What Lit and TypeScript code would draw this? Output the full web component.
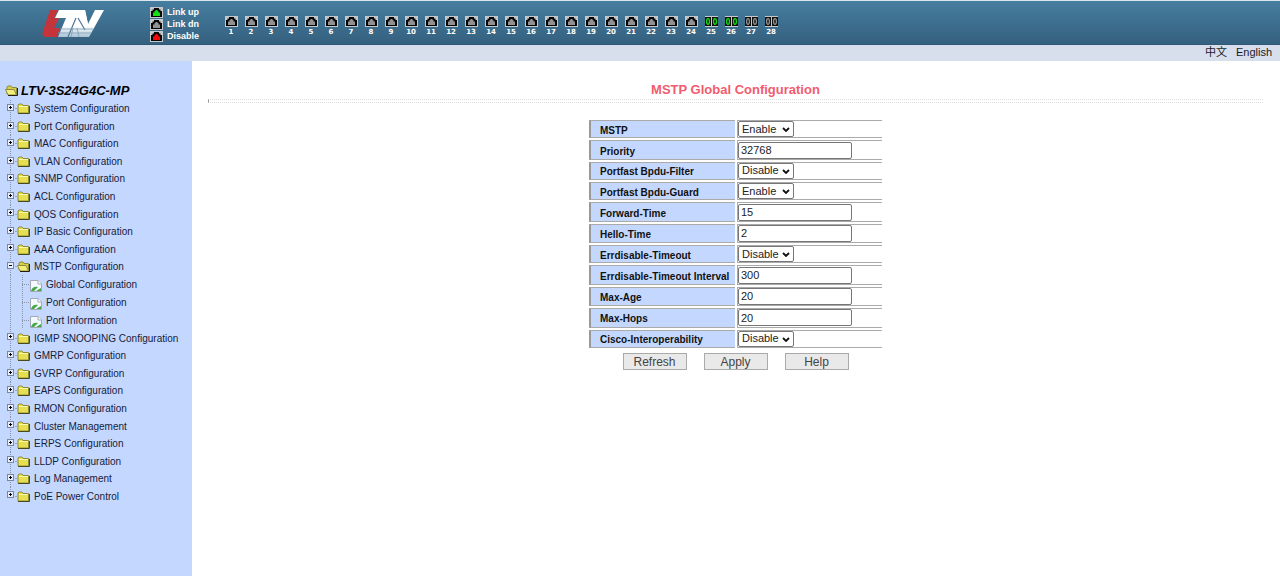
import { LitElement, html, svg, css } from "lit";
import { customElement, property } from "lit/decorators.js";

type PortState = "up" | "down" | "off";

@customElement("port-icon")
class PortIcon extends LitElement {
  @property() state: PortState = "down";
  @property({ type: Boolean }) fiber = false;

  static styles = css`
    :host { display: block; width: 13px; height: 11px; }
    svg { display: block; width: 100%; height: 100%; }
  `;

  render() {
    const lamp = { up: "#12e012", down: "#929292", off: "#f00a0a" }[this.state];
    return html`<svg viewBox="0 0 13 11" aria-hidden="true">
      <rect width="13" height="11" fill="#c4c8ca" />
      ${this.fiber
        ? svg`<rect x="0" y="1" width="6" height="9" fill="#111" /><rect x="7" y="1" width="6" height="9" fill="#111" />
            <ellipse cx="3" cy="5.5" rx="1.4" ry="2.8" fill="none" stroke=${lamp} stroke-width="1.3" />
            <ellipse cx="10" cy="5.5" rx="1.4" ry="2.8" fill="none" stroke=${lamp} stroke-width="1.3" />`
        : svg`<path d="M1 10V4H2.5V2.5H4V1H9V2.5H10.500V4H12V10Z" fill="#050505" />
            <path d="M3 9V5.500H4.500V4H5.500V3H7.500V4H8.500V5.500H10V9Z" fill=${lamp} />`}
    </svg>`;
  }
}

type Kind = "closed" | "open" | "page";
interface Node { text: string; kind: Kind; }

const closed = (text: string): Node => ({ text, kind: "closed" });
const TREE: Node[] = [
  ...["System", "Port", "MAC", "VLAN", "SNMP", "ACL", "QOS", "IP Basic", "AAA"].map((n) => closed(`${n} Configuration`)),
  { text: "MSTP Configuration", kind: "open" },
  { text: "Global Configuration", kind: "page" },
  { text: "Port Configuration", kind: "page" },
  { text: "Port Information", kind: "page" },
  ...["IGMP SNOOPING", "GMRP", "GVRP", "EAPS", "RMON"].map((n) => closed(`${n} Configuration`)),
  closed("Cluster Management"),
  closed("ERPS Configuration"),
  closed("LLDP Configuration"),
  closed("Log Management"),
  closed("PoE Power Control"),
];

const folder = html`<svg class="glyph" viewBox="0 0 13 11" aria-hidden="true">
  <path d="M1 10V2L2 1H5L6 2.500H11.500V10Z" fill="#e6df50" stroke="#8e8c3c" />
  <path d="M2 3.500H11" stroke="#fbf8a8" />
  <path d="M1 10.500H12.500V3" fill="none" stroke="#4a4a20" />
</svg>`;

const openFolder = html`<svg class="glyph" viewBox="0 0 13 11" aria-hidden="true">
  <path d="M2 9V2L3 1H6L7 2.500H11.500V10Z" fill="#d8cf48" stroke="#8e8c3c" />
  <path d="M0.500 4.500H9L11.500 10H3Z" fill="#f3ee7c" stroke="#8e8c3c" />
  <path d="M3 10.500H12.500V3" fill="none" stroke="#22220e" />
</svg>`;

const page = html`<svg class="page" viewBox="0 0 14 14" aria-hidden="true">
  <path d="M1.500 1.500H9L12.500 5V12.500H1.500Z" fill="#f4f8ff" stroke="#a2a8b4" />
  <path d="M9 1.500V5H12.500" fill="#fff" stroke="#a2a8b4" />
  <path d="M2 12C3 8 6 7 9 8L5 12ZM7 12L12 9V12Z" fill="#44a844" />
</svg>`;

@customElement("nav-tree")
class NavTree extends LitElement {
  static styles = css`
    :host { display: block; padding: 19px 0 0 5px; color: #16203a; font: 10px "Liberation Sans", Arial, sans-serif; }
    a { color: inherit; text-decoration: none; white-space: nowrap; }
    .root { display: flex; align-items: center; gap: 3px; height: 20px; color: #000; font: italic bold 13px "Liberation Sans", Arial, sans-serif; }
    ul { display: grid; grid-auto-rows: 1fr; height: 405px; margin: 0; padding: 0; list-style: none; }
    li { display: flex; align-items: center; padding-left: 2px; }
    .glyph { display: block; flex: none; width: 13px; height: 11px; }
    .page { display: block; flex: none; width: 14px; height: 14px; margin-top: 4px; }
    .trunk { flex: none; align-self: stretch; width: 8px; background: repeating-linear-gradient(#8a94a8 0 1px, transparent 1px 2px) 3px 0 / 1px 100% no-repeat; }
    .last { background-size: 1px 50%; }
    .box { display: block; width: 7px; height: 7px; margin-top: 4px; }
    .twig { flex: none; width: 2px; height: 1px; background: #9aa5bb; }
    .branch { flex: none; align-self: stretch; width: 8px; margin-left: 6px;
      background: repeating-linear-gradient(#8a94a8 0 1px, transparent 1px 2px) 1px 0 / 1px 100% no-repeat,
        repeating-linear-gradient(90deg, #8a94a8 0 1px, transparent 1px 2px) 1px 50% / 7px 1px no-repeat; }
    .text { margin-left: 4px; }
    .leaf { margin-left: 3px; }
  `;

  render() {
    return html`
      <a class="root" href="#">${openFolder}LTV-3S24G4C-MP</a>
      <ul>
        ${TREE.map((n, i) => n.kind === "page"
          ? html`<li><span class="trunk"></span><span class="branch"></span>${page}<a class="leaf" href="#">${n.text}</a></li>`
          : html`<li>
              <span class="trunk ${i === TREE.length - 1 ? "last" : ""}">
                <svg class="box" viewBox="0 0 7 7" aria-hidden="true">
                  <rect x=".5" y=".5" width="6" height="6" fill="#e6eeff" stroke="#7b869c" />
                  <path d=${n.kind === "open" ? "M2 3.500H5" : "M2 3.500H5M3.500 2V5"} stroke="#000" />
                </svg>
              </span>
              <span class="twig"></span>${n.kind === "open" ? openFolder : folder}<a class="text" href="#">${n.text}</a>
            </li>`)}
      </ul>`;
  }
}

interface Field { id: string; label: string; value: string; choice?: boolean; }
const FIELDS: Field[] = [
  { id: "mstp", label: "MSTP", value: "Enable", choice: true },
  { id: "priority", label: "Priority", value: "32768" },
  { id: "filter", label: "Portfast Bpdu-Filter", value: "Disable", choice: true },
  { id: "guard", label: "Portfast Bpdu-Guard", value: "Enable", choice: true },
  { id: "forward", label: "Forward-Time", value: "15" },
  { id: "hello", label: "Hello-Time", value: "2" },
  { id: "errdisable", label: "Errdisable-Timeout", value: "Disable", choice: true },
  { id: "interval", label: "Errdisable-Timeout Interval", value: "300" },
  { id: "age", label: "Max-Age", value: "20" },
  { id: "hops", label: "Max-Hops", value: "20" },
  { id: "cisco", label: "Cisco-Interoperability", value: "Disable", choice: true },
];

@customElement("mstp-form")
class MstpForm extends LitElement {
  static styles = css`
    :host { display: block; padding: 20px 17px 0 16px; }
    h1 { margin: 0; text-align: center; font-size: 13px; line-height: 18px; color: #f25c6e; }
    .rule { height: 4px; box-sizing: border-box; border: dotted #dcdcdc; border-width: 1px 0; border-left: 1px solid #999; }
    form { display: flex; flex-direction: column; align-items: center; margin-top: 15px; }
    table { height: 232px; border-spacing: 2px; }
    th, td { box-sizing: border-box; padding: 0; border: 1px solid #aaa; border-width: 1px 0 1px 1px; }
    th { width: 146px; padding: 3px 0 0 9px; background: #c4d8ff; border-left: 2px solid #999; text-align: left; white-space: nowrap; font-size: 10px; line-height: 12px; color: #111; }
    td { width: 145px; line-height: 0; }
    input, select { box-sizing: border-box; display: block; margin: 0; border: 1px solid #767676; border-radius: 2px; background: #fff; color: #222; font: 11px/13px "Liberation Sans", Arial, sans-serif; }
    input { width: 114px; height: 17px; padding: 0 2px; }
    .pick { position: relative; display: block; width: 56px; }
    select { width: 56px; height: 16px; padding: 0 0 0 3px; appearance: none; }
    .arrow { position: absolute; right: 4px; top: 6px; width: 8px; height: 5px; pointer-events: none; }
    .actions { display: flex; gap: 17px; margin-top: 3px; }
    button { width: 64px; height: 17px; padding: 0; border: 1px solid #aaa; background: #e9e9e9; color: #444; font: 12px/14px "Liberation Sans", Arial, sans-serif; }
  `;

  render() {
    return html`
      <h1>MSTP Global Configuration</h1>
      <div class="rule"></div>
      <form @submit=${(e: Event) => e.preventDefault()}>
        <table>
          ${FIELDS.map((f) => html`<tr>
            <th scope="row"><label for=${f.id}>${f.label}</label></th>
            <td>${f.choice
              ? html`<span class="pick"><select id=${f.id}>
                  ${["Enable", "Disable"].map((o) => html`<option ?selected=${o === f.value}>${o}</option>`)}
                </select><svg class="arrow" viewBox="0 0 8 5" aria-hidden="true"><path d="M1 1L4 4L7 1" fill="none" stroke="#111" stroke-width="1.800" /></svg></span>`
              : html`<input id=${f.id} type="text" .value=${f.value} />`}</td>
          </tr>`)}
        </table>
        <div class="actions">${["Refresh", "Apply", "Help"].map((b) => html`<button type="button">${b}</button>`)}</div>
      </form>`;
  }
}

@customElement("app-root")
class AppRoot extends LitElement {
  static styles = css`
    :host { display: flex; flex-direction: column; min-height: 100vh; background: #fff; font-family: "Liberation Sans", Arial, sans-serif; }
    header { display: flex; box-sizing: border-box; height: 45px; border-top: 1px solid #dbe6ee; border-bottom: 1px solid #2f5876; background: linear-gradient(#467e9f, #35607f); color: #fff; }
    .logo { display: block; width: 64px; height: 32px; margin: 7px 0 0 41px; }
    .legend { display: grid; align-content: start; gap: 1px; width: 71px; margin: 6px 0 0 45px; font-weight: bold; font-size: 9px; line-height: 11px; }
    .key { display: flex; gap: 4px; align-items: center; }
    .ports { display: flex; margin-top: 15px; }
    .port { display: grid; align-content: start; justify-items: center; width: 20px; row-gap: 1px; font: bold 7px/8px "DejaVu Sans", Verdana, sans-serif; }
    .langs { display: flex; justify-content: flex-end; gap: 9px; height: 16px; padding-right: 8px; background: #d8dfec; font: 11px/14px "Liberation Sans", "Noto Sans CJK SC", sans-serif; }
    .langs a { color: #1a1a2a; text-decoration: none; }
    .body { display: flex; flex: 1; }
    nav { flex: none; width: 192px; background: #c4d8ff; }
    main { flex: 1; min-width: 0; }
  `;

  render() {
    const legend: [PortState, string][] = [["up", "Link up"], ["down", "Link dn"], ["off", "Disable"]];
    return html`
      <header>
        <svg class="logo" viewBox="0 0 64 32" role="img" aria-label="LTV">
          <defs><linearGradient id="silver" x2="0" y2="1"><stop offset=".6" stop-color="#fff" /><stop offset="1" stop-color="#a9c3d6" /></linearGradient></defs>
          <path d="M9 2H17L13 10H18L13 20H19L16 29H6Q0 29 2 23Z" fill="#c5343b" />
          <path d="M18 2H44L47 16L54 2H63L48 29H17L25 10H14Z" fill="url(#silver)" />
          <path d="M44 2L47 16L43 19L36 10Z" fill="#fff" />
          <path d="M35 10L27 29M37 10L44 22" stroke="#4a7797" stroke-width="1.200" fill="none" />
          <path d="M32 20L30 29M36 20L38 29M19 21H52M17 25H50" stroke="#7f9fb6" stroke-width=".8" fill="none" />
        </svg>
        <div class="legend">${legend.map(([s, t]) => html`<div class="key"><port-icon .state=${s}></port-icon><span>${t}</span></div>`)}</div>
        <div class="ports">
          ${Array.from({ length: 28 }, (_, i) => html`<div class="port">
            <port-icon .state=${i === 24 || i === 25 ? "up" : "down"} .fiber=${i > 23}></port-icon><span>${i + 1}</span>
          </div>`)}
        </div>
      </header>
      <div class="langs"><a href="#" lang="zh">中文</a><a href="#">English</a></div>
      <div class="body">
        <nav><nav-tree></nav-tree></nav>
        <main><mstp-form></mstp-form></main>
      </div>`;
  }
}
